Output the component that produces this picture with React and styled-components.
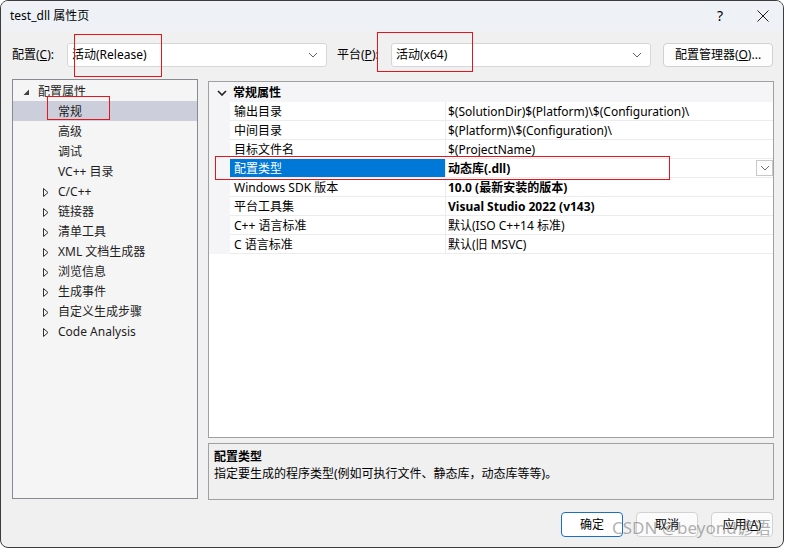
import React from 'react';
import styled, { createGlobalStyle } from 'styled-components';

const GlobalStyle = createGlobalStyle`
	html, body {
		margin: 0;
		padding: 0;
		background: #ffffff;
	}
	body {
		font-family: 'Noto Sans', 'Noto Sans CJK SC', sans-serif;
		font-size: 12px;
		color: #000;
	}
	* {
		box-sizing: border-box;
	}
`;

const treeItems = [
	{ label: '配置属性', level: 0, expander: 'open' },
	{ label: '常规', level: 1, selected: true },
	{ label: '高级', level: 1 },
	{ label: '调试', level: 1 },
	{ label: 'VC++ 目录', level: 1 },
	{ label: 'C/C++', level: 1, expander: 'closed' },
	{ label: '链接器', level: 1, expander: 'closed' },
	{ label: '清单工具', level: 1, expander: 'closed' },
	{ label: 'XML 文档生成器', level: 1, expander: 'closed' },
	{ label: '浏览信息', level: 1, expander: 'closed' },
	{ label: '生成事件', level: 1, expander: 'closed' },
	{ label: '自定义生成步骤', level: 1, expander: 'closed' },
	{ label: 'Code Analysis', level: 1, expander: 'closed' },
];

const properties = [
	{ name: '输出目录', value: '$(SolutionDir)$(Platform)\\$(Configuration)\\' },
	{ name: '中间目录', value: '$(Platform)\\$(Configuration)\\' },
	{ name: '目标文件名', value: '$(ProjectName)' },
	{ name: '配置类型', value: '动态库(.dll)', bold: true, selected: true },
	{ name: 'Windows SDK 版本', value: '10.0 (最新安装的版本)', bold: true },
	{ name: '平台工具集', value: 'Visual Studio 2022 (v143)', bold: true },
	{ name: 'C++ 语言标准', value: '默认(ISO C++14 标准)' },
	{ name: 'C 语言标准', value: '默认(旧 MSVC)' },
];

// red annotation boxes drawn over the screenshot
const marks = [
	{ x: 73, y: 33, w: 88, h: 43 },
	{ x: 376, y: 31, w: 96, h: 40 },
	{ x: 46, y: 95, w: 63, h: 24 },
	{ x: 214, y: 155, w: 455, h: 24 },
];

const Chevron = ({ color = '#606060', width = 1 }) => (
	<svg width="10" height="6" viewBox="0 0 10 6">
		<path d="M1 1 L5 5 L9 1" fill="none" stroke={color} strokeWidth={width} />
	</svg>
);

const Expander = ({ type }) => {
	if (type === 'open') {
		return (
			<svg width="7" height="7" viewBox="0 0 7 7">
				<path d="M6 0.5 L6 6 L0.5 6 Z" fill="#404040" />
			</svg>
		);
	}
	if (type === 'closed') {
		return (
			<svg width="6" height="9" viewBox="0 0 6 9">
				<path d="M0.5 0.5 L5 4.5 L0.5 8.5 Z" fill="none" stroke="#303030" strokeWidth="1" />
			</svg>
		);
	}
	return null;
};

export default function App() {
	return (
		<>
			<GlobalStyle />
			<Window>
				<TitleBar>
					<Title>test_dll 属性页</Title>
					<TitleButtons>
						<HelpGlyph>?</HelpGlyph>
						<svg width="12" height="12" viewBox="0 0 12 12">
							<path d="M0.5 0.5 L11.5 11.5 M11.5 0.5 L0.5 11.5" stroke="#1a1a1a" strokeWidth="1" />
						</svg>
					</TitleButtons>
				</TitleBar>
				<Body>
					<ConfigRow>
						<FieldLabel $width={55}>
							配置(<u>C</u>):
						</FieldLabel>
						<Combo>
							<span>活动(Release)</span>
							<Chevron />
						</Combo>
						<FieldLabel $width={54} $gap={10}>
							平台(<u>P</u>):
						</FieldLabel>
						<Combo>
							<span>活动(x64)</span>
							<Chevron />
						</Combo>
						<ManagerButton>
							配置管理器(<u>O</u>)...
						</ManagerButton>
					</ConfigRow>
					<Main>
						<TreePanel>
							{treeItems.map((item) => (
								<TreeRow key={item.label} $level={item.level} $selected={item.selected}>
									<ExpanderBox>
										<Expander type={item.expander} />
									</ExpanderBox>
									<span>{item.label}</span>
								</TreeRow>
							))}
						</TreePanel>
						<RightColumn>
							<PropGrid>
								<GridHeader>
									<HeaderToggle>
										<Chevron color="#202020" width={1.6} />
									</HeaderToggle>
									<HeaderText>常规属性</HeaderText>
								</GridHeader>
								{properties.map((p) => (
									<PropRow key={p.name}>
										<Gutter />
										<NameCell $selected={p.selected}>{p.name}</NameCell>
										<ValueCell $bold={p.bold}>
											<span>{p.value}</span>
											{p.selected && (
												<DropButton>
													<Chevron color="#707070" />
												</DropButton>
											)}
										</ValueCell>
									</PropRow>
								))}
							</PropGrid>
							<DescPanel>
								<DescTitle>配置类型</DescTitle>
								<DescText>指定要生成的程序类型(例如可执行文件、静态库，动态库等等)。</DescText>
							</DescPanel>
						</RightColumn>
					</Main>
					<Footer>
						<DialogButton $primary>确定</DialogButton>
						<DialogButton>取消</DialogButton>
						<DialogButton>
							应用(<u>A</u>)
						</DialogButton>
					</Footer>
				</Body>
				{marks.map((m, i) => (
					<Mark key={i} $x={m.x} $y={m.y} $w={m.w} $h={m.h} />
				))}
				<Watermark>CSDN @beyond谚语</Watermark>
			</Window>
		</>
	);
}

// styled components
const Window = styled.div`
	position: relative;
	width: 784px;
	height: 548px;
	border: 1px solid #3c3c3c;
	border-radius: 8px;
	background: #f0f0f0;
	overflow: hidden;
	display: flex;
	flex-direction: column;
`;

const TitleBar = styled.div`
	height: 30px;
	flex: none;
	display: flex;
	align-items: center;
	justify-content: space-between;
	padding: 0 14px 0 9px;
	background: #eef2f7;
`;

const Title = styled.div`
	font-size: 12px;
	line-height: 16px;
`;

const TitleButtons = styled.div`
	display: flex;
	align-items: center;
	gap: 34px;
`;

const HelpGlyph = styled.span`
	font-size: 14px;
	line-height: 16px;
`;

const Body = styled.div`
	flex: 1;
	display: flex;
	flex-direction: column;
	padding: 12px 9px 0 11px;
`;

const ConfigRow = styled.div`
	display: flex;
	align-items: center;
	height: 24px;
`;

const FieldLabel = styled.div`
	width: ${(p) => p.$width}px;
	margin-left: ${(p) => p.$gap || 0}px;
	flex: none;
	line-height: 16px;
`;

const Combo = styled.div`
	width: 260px;
	height: 24px;
	flex: none;
	display: flex;
	align-items: center;
	justify-content: space-between;
	padding: 0 8px 0 4px;
	background: #ffffff;
	border: 1px solid #d6d6d6;
	border-radius: 3px;
	line-height: 16px;
`;

const ManagerButton = styled.div`
	width: 110px;
	height: 24px;
	margin-left: 12px;
	flex: none;
	display: flex;
	align-items: center;
	justify-content: center;
	background: #fdfdfd;
	border: 1px solid #d0d0d0;
	border-radius: 4px;
	line-height: 16px;
`;

const Main = styled.div`
	display: flex;
	margin-top: 12px;
`;

const TreePanel = styled.div`
	width: 186px;
	height: 420px;
	flex: none;
	padding-top: 1px;
	background: #f5f5f5;
	border: 1px solid #858a93;
`;

const TreeRow = styled.div`
	height: 20px;
	display: flex;
	align-items: center;
	padding-top: 2px;
	padding-left: ${(p) => 10 + p.$level * 20}px;
	background: ${(p) => (p.$selected ? '#cccedb' : 'transparent')};
	line-height: 16px;
	color: #1e1e1e;
`;

const ExpanderBox = styled.span`
	width: 15px;
	flex: none;
	display: flex;
	align-items: center;
`;

const RightColumn = styled.div`
	width: 566px;
	margin-left: 10px;
	flex: none;
	display: flex;
	flex-direction: column;
`;

const PropGrid = styled.div`
	height: 357px;
	margin-top: 2px;
	background: #ffffff;
	border: 1px solid #a0a0a0;
`;

const GridHeader = styled.div`
	height: 20px;
	display: flex;
	align-items: center;
	padding-top: 1px;
	background: #f5f5f7;
`;

const HeaderToggle = styled.span`
	width: 24px;
	display: flex;
	justify-content: center;
	padding-left: 2px;
`;

const HeaderText = styled.span`
	font-weight: bold;
	line-height: 16px;
`;

const PropRow = styled.div`
	display: grid;
	grid-template-columns: 21px 215px 1fr;
	height: 19px;
`;

const Gutter = styled.div`
	background: #f5f5f7;
`;

const NameCell = styled.div`
	display: flex;
	align-items: center;
	padding: 2px 0 0 4px;
	border-bottom: 1px solid #ececf0;
	background: ${(p) => (p.$selected ? '#0078d7' : 'transparent')};
	color: ${(p) => (p.$selected ? '#ffffff' : '#000')};
	line-height: 16px;
	white-space: nowrap;
`;

const ValueCell = styled.div`
	display: flex;
	align-items: center;
	justify-content: space-between;
	padding: 2px 0 0 2px;
	border-left: 1px solid #ececf0;
	border-bottom: 1px solid #ececf0;
	font-weight: ${(p) => (p.$bold ? 'bold' : 'normal')};
	line-height: 16px;
	white-space: nowrap;
`;

const DropButton = styled.span`
	width: 17px;
	height: 16px;
	margin-top: -2px;
	display: flex;
	align-items: center;
	justify-content: center;
	background: #ffffff;
	border: 1px solid #c8c8c8;
`;

const DescPanel = styled.div`
	height: 57px;
	margin-top: 5px;
	padding: 4px 5px;
	background: #f0f0f0;
	border: 1px solid #a0a0a0;
`;

const DescTitle = styled.div`
	font-weight: bold;
	line-height: 17px;
`;

const DescText = styled.div`
	line-height: 17px;
`;

const Footer = styled.div`
	display: flex;
	justify-content: flex-end;
	gap: 13px;
	margin-top: 12px;
	padding-right: 1px;
`;

const DialogButton = styled.div`
	width: 62px;
	height: 25px;
	display: flex;
	align-items: center;
	justify-content: center;
	background: ${(p) => (p.$primary ? '#ffffff' : '#fbfbfb')};
	border: 1px solid ${(p) => (p.$primary ? '#1a6fc4' : '#d2d2d2')};
	border-radius: 4px;
	line-height: 16px;
`;

const Mark = styled.div`
	position: absolute;
	left: ${(p) => p.$x}px;
	top: ${(p) => p.$y}px;
	width: ${(p) => p.$w}px;
	height: ${(p) => p.$h}px;
	border: 1px solid #e8141c;
	pointer-events: none;
`;

const Watermark = styled.div`
	position: absolute;
	left: 611px;
	top: 517px;
	font-size: 17px;
	line-height: 20px;
	color: rgba(110, 110, 110, 0.55);
	white-space: nowrap;
	pointer-events: none;
`;
